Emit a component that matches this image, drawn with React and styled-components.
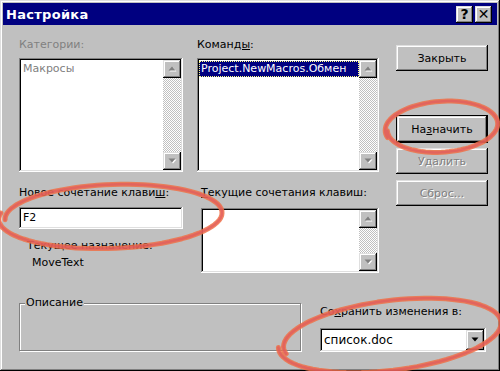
import React from 'react';
import styled, { createGlobalStyle } from 'styled-components';

const GlobalStyle = createGlobalStyle`
  html, body {
    margin: 0;
    padding: 0;
    background: #c0c0c0;
  }
  body {
    font-family: "DejaVu Sans", "Liberation Sans", sans-serif;
    font-size: 11px;
    color: #000;
  }
`

const raised = `
  box-shadow: inset -1px -1px #000, inset 1px 1px #dfdfdf,
    inset -2px -2px #808080, inset 2px 2px #fff;
`
const sunken = `
  box-shadow: inset -1px -1px #fff, inset 1px 1px #808080,
    inset -2px -2px #dfdfdf, inset 2px 2px #000;
`

const Dialog = styled.div`
  position: relative;
  width: 500px;
  height: 371px;
  box-sizing: border-box;
  padding: 3px;
  background: #c0c0c0;
  overflow: hidden;
  ${raised}
`

const TitleBar = styled.div`
  height: 22px;
  background: #000080;
  color: #fff;
  display: flex;
  align-items: center;
  padding: 0 5px 0 3px;
`

const TitleText = styled.div`
  flex: 1;
  font-weight: bold;
  font-size: 13px;
  letter-spacing: 0.3px;
`

const TitleButton = styled.div`
  width: 17px;
  height: 17px;
  margin-left: 2px;
  box-sizing: border-box;
  background: #c0c0c0;
  color: #000;
  font-weight: bold;
  font-size: 14px;
  display: flex;
  align-items: center;
  justify-content: center;
  ${raised}
`

const Content = styled.div`
  padding: 13px 0 0 16px;
`

const TopSection = styled.div`
  display: flex;
`

const LeftArea = styled.div`
  width: 360px;
`

const Row = styled.div`
  display: grid;
  grid-template-columns: ${p => p.$cols};
  column-gap: ${p => p.$gap}px;
  margin-top: ${p => p.$top || 0}px;
`

const Field = styled.div`
  display: flex;
  flex-direction: column;
`

const Label = styled.div`
  line-height: 14px;
  height: 14px;
  white-space: nowrap;
  color: ${p => (p.$disabled ? '#808080' : '#000')};
  padding-left: ${p => p.$indent || 0}px;
  margin-top: ${p => p.$top || 0}px;
`

const ListBox = styled.div`
  height: ${p => p.$height}px;
  margin-top: ${p => p.$top}px;
  box-sizing: border-box;
  padding: 2px;
  background: #fff;
  display: flex;
  ${sunken}
`

const ListItems = styled.div`
  flex: 1;
  overflow: hidden;
  padding-top: 1px;
`

const Item = styled.div`
  height: 16px;
  line-height: 16px;
  padding: 0 2px;
  white-space: nowrap;
  color: ${p => (p.$disabled ? '#808080' : p.$selected ? '#fff' : '#000')};
  background: ${p => (p.$selected ? '#000080' : 'transparent')};
  outline: ${p => (p.$selected ? '1px dotted #ffff80' : 'none')};
  outline-offset: -1px;
`

const ScrollBar = styled.div`
  width: 18px;
  display: flex;
  flex-direction: column;
  justify-content: space-between;
  background: repeating-conic-gradient(#c0c0c0 0 25%, #fff 0 50%) 0 0 / 2px 2px;
`

const ScrollButton = styled.div`
  width: 18px;
  height: 18px;
  box-sizing: border-box;
  background: #c0c0c0;
  display: flex;
  align-items: center;
  justify-content: center;
  ${raised}
`

const TextInput = styled.div`
  height: 22px;
  margin-top: 7px;
  box-sizing: border-box;
  padding: 2px 4px;
  line-height: 18px;
  background: #fff;
  ${sunken}
`

const ButtonColumn = styled.div`
  margin-left: 17px;
  width: 92px;
  padding-top: 7px;
  display: flex;
  flex-direction: column;
`

const Button = styled.div`
  height: ${p => (p.$default ? 28 : 26)}px;
  margin-top: ${p => p.$top || 0}px;
  box-sizing: border-box;
  background: #c0c0c0;
  display: flex;
  align-items: center;
  justify-content: center;
  color: ${p => (p.$disabled ? '#808080' : '#000')};
  text-shadow: ${p => (p.$disabled ? '1px 1px 0 #fff' : 'none')};
  border: ${p => (p.$default ? '1px solid #000' : 'none')};
  ${raised}
`

const BottomSection = styled.div`
  display: flex;
  align-items: flex-end;
  margin-top: 30px;
`

const GroupBox = styled.div`
  position: relative;
  width: 282px;
  height: 48px;
  margin-bottom: 1px;
  box-sizing: border-box;
  border: 1px solid #808080;
  box-shadow: 1px 1px 0 #fff, inset 1px 1px 0 #fff;
`

const Legend = styled.div`
  position: absolute;
  top: -8px;
  left: 5px;
  padding: 0 1px;
  line-height: 14px;
  background: #c0c0c0;
`

const SaveColumn = styled.div`
  margin-left: 19px;
  width: 166px;
  display: flex;
  flex-direction: column;
`

const Combo = styled.div`
  height: 24px;
  margin-top: 9px;
  box-sizing: border-box;
  padding: 2px;
  background: #fff;
  display: flex;
  ${sunken}
`

const ComboText = styled.div`
  flex: 1;
  line-height: 20px;
  padding-left: 2px;
  font-size: 12px;
`

const DropButton = styled(ScrollButton)`
  height: 20px;
`

const Marks = styled.svg`
  position: absolute;
  left: 0;
  top: 0;
  pointer-events: none;
`

const Arrow = ({ down, disabled }) => {
  const pts = down ? '0,0 7,0 3.5,4' : '3.5,0 7,4 0,4';
  return (
    <svg width="9" height="6" viewBox="-0.5 -0.5 9 6">
      {disabled && <polygon points={pts} fill="#fff" transform="translate(1 1)" />}
      <polygon points={pts} fill={disabled ? '#808080' : '#000'} />
    </svg>
  );
};

// hand-drawn marker loop: a slightly open spiral round an ellipse
const loop = (cx, cy, rx, ry, rot, a0, sweep, grow) => {
  const pts = [];
  const n = 90;
  const r = (rot * Math.PI) / 180;
  for (let i = 0; i <= n; i++) {
    const t = i / n;
    const a = ((a0 + sweep * t) * Math.PI) / 180;
    const k = 1 + grow * t;
    const x = rx * k * Math.cos(a);
    const y = ry * k * Math.sin(a);
    pts.push(
      (cx + x * Math.cos(r) - y * Math.sin(r)).toFixed(1) + ' ' +
      (cy + x * Math.sin(r) + y * Math.cos(r)).toFixed(1)
    );
  }
  return 'M' + pts.join(' L');
};

const loops = [
  loop(442, 127, 57, 26, -4, 165, 375, -0.04),
  loop(112, 216, 107, 31, -2, 180, 372, 0.06),
  loop(391, 335, 108, 34, -7, 170, 372, 0.05),
];

const U = styled.span`
  text-decoration: underline;
`

const App = () => (
  <>
    <GlobalStyle />
    <Dialog>
      <TitleBar>
        <TitleText>Настройка</TitleText>
        <TitleButton>?</TitleButton>
        <TitleButton>✕</TitleButton>
      </TitleBar>
      <Content>
        <TopSection>
          <LeftArea>
            <Row $cols="164px 182px" $gap={14}>
              <Field>
                <Label $disabled>Категории:</Label>
                <ListBox $height={114} $top={6}>
                  <ListItems>
                    <Item $disabled>Макросы</Item>
                  </ListItems>
                  <ScrollBar>
                    <ScrollButton><Arrow disabled /></ScrollButton>
                    <ScrollButton><Arrow down disabled /></ScrollButton>
                  </ScrollBar>
                </ListBox>
              </Field>
              <Field>
                <Label>Коман<U>ды</U>:</Label>
                <ListBox $height={114} $top={6}>
                  <ListItems>
                    <Item $selected>Project.NewMacros.Обмен</Item>
                  </ListItems>
                  <ScrollBar>
                    <ScrollButton><Arrow disabled /></ScrollButton>
                    <ScrollButton><Arrow down disabled /></ScrollButton>
                  </ScrollBar>
                </ListBox>
              </Field>
            </Row>
            <Row $cols="164px 178px" $gap={18} $top={14}>
              <Field>
                <Label>Новое сочетание клави<U>ш</U>:</Label>
                <TextInput>F2</TextInput>
                <Label $indent={8} $top={10}>Текущее назначение:</Label>
                <Label $indent={13} $top={3}>MoveText</Label>
              </Field>
              <Field>
                <Label><U>Т</U>екущие сочетания клавиш:</Label>
                <ListBox $height={65} $top={8}>
                  <ListItems />
                  <ScrollBar>
                    <ScrollButton><Arrow disabled /></ScrollButton>
                    <ScrollButton><Arrow down disabled /></ScrollButton>
                  </ScrollBar>
                </ListBox>
              </Field>
            </Row>
          </LeftArea>
          <ButtonColumn>
            <Button>Закрыть</Button>
            <Button $default $top={44}>На<U>з</U>начить</Button>
            <Button $disabled $top={5}>Удалить</Button>
            <Button $disabled $top={6}>Сброс...</Button>
          </ButtonColumn>
        </TopSection>
        <BottomSection>
          <GroupBox>
            <Legend>Описание</Legend>
          </GroupBox>
          <SaveColumn>
            <Label>Со<U>х</U>ранить изменения в:</Label>
            <Combo>
              <ComboText>список.doc</ComboText>
              <DropButton><Arrow down /></DropButton>
            </Combo>
          </SaveColumn>
        </BottomSection>
      </Content>
      <Marks width="500" height="371" viewBox="0 0 500 371">
        {loops.map((d, i) => (
          <g key={i}>
            <path d={d} fill="none" stroke="#ee7048" strokeWidth="5" strokeLinecap="round" strokeLinejoin="round" opacity="0.85" />
            <path d={d} fill="none" stroke="#dc5060" strokeWidth="2.5" strokeLinecap="round" strokeLinejoin="round" opacity="0.55" />
          </g>
        ))}
      </Marks>
    </Dialog>
  </>
);

export default App;
